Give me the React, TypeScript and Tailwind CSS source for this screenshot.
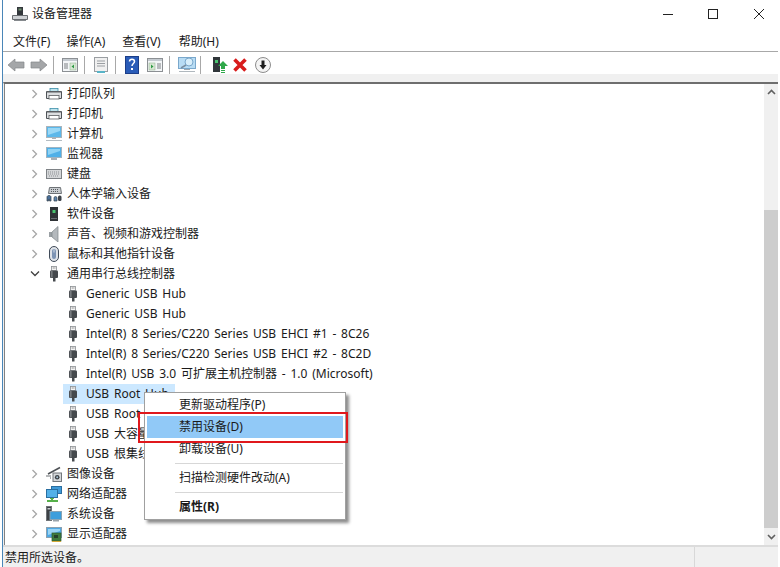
import React from "react";

const Printer = () => (
  <svg width="16" height="16" viewBox="0 0 16 16">
    <rect x="4" y="2.500" width="8" height="3" fill="#bfe4ee" stroke="#3d8ea8" strokeWidth="0.800" />
    <path d="M0.500 5.500h15v7h-15z" fill="#dcdee0" stroke="#4e5256" />
    <rect x="1" y="5" width="14" height="1.500" fill="#5a5e62" />
    <rect x="3" y="9.500" width="10" height="3.500" fill="#fff" stroke="#5a5e62" strokeWidth="0.800" />
  </svg>
);
const Computer = () => (
  <svg width="16" height="16" viewBox="0 0 16 16">
    <rect x="0.500" y="0.500" width="15" height="11" fill="#5cb8ea" stroke="#a8b4bc" />
    <path d="M2 2h12v3L2 9z" fill="#9ad8f6" />
    <rect x="6" y="12" width="4" height="1" fill="#a8b0b6" />
    <rect x="0" y="14" width="16" height="1" fill="#b4bcc2" />
  </svg>
);
const Monitor = () => (
  <svg width="16" height="16" viewBox="0 0 16 16">
    <rect x="0.500" y="1.500" width="15" height="10" fill="#4fb0e8" stroke="#9fb4c2" />
    <path d="M2 3h12v2L2 9z" fill="#8ed2f4" />
    <rect x="5" y="12" width="6" height="2" fill="#a8b0b6" />
  </svg>
);
const Keyboard = () => (
  <svg width="16" height="16" viewBox="0 0 16 16">
    <rect x="0.500" y="3.500" width="15" height="9" fill="#d4d6d8" stroke="#7e8286" />
    <path d="M2 6h12M2 8h12M3 10h10" stroke="#8d9094" strokeWidth="1" strokeDasharray="1 1" />
  </svg>
);
const Hid = () => (
  <svg width="16" height="16" viewBox="0 0 16 16">
    <path d="M3.500 1.500h11l1 6h-13z" fill="#c8ccd0" stroke="#6e7276" />
    <path d="M5 3.500h8M5 5.500h8" stroke="#565a5e" strokeDasharray="1 1" />
    <path d="M1 15V11c0-2 4-2 4 0v4h-1.500l-.5-2-.5 2z" fill="#4a6f98" stroke="#34404c" strokeWidth="0.700" />
    <path d="M8 15v-3a1.500 1.500 0 0 1 3 0v3z" fill="#5d84ae" stroke="#34404c" strokeWidth="0.700" />
    <rect x="12" y="9.500" width="3.500" height="5.500" rx="1.500" fill="#3b4148" />
  </svg>
);
const Software = () => (
  <svg width="16" height="16" viewBox="0 0 16 16">
    <rect x="4" y="1" width="8" height="14" fill="#2f3336" />
    <rect x="6.500" y="4" width="3" height="3" fill="#49c46e" />
    <rect x="5" y="12" width="6" height="1" fill="#6a6e72" />
  </svg>
);
const Speaker = () => (
  <svg width="16" height="16" viewBox="0 0 16 16">
    <rect x="3" y="6" width="3" height="5" fill="#9aa0a4" />
    <path d="M6 6l6-5.500v15.500l-6-5z" fill="#b4b9bd" stroke="#80868a" strokeWidth="0.700" />
  </svg>
);
const Mouse = () => (
  <svg width="16" height="16" viewBox="0 0 16 16">
    <rect x="3.500" y="0.500" width="9" height="15" rx="4.500" fill="#dfe3e8" stroke="#3f4a58" />
    <rect x="6" y="3" width="4" height="10" rx="2" fill="#7d94b4" />
    <rect x="7.500" y="3.500" width="1" height="3" fill="#d4dce8" />
  </svg>
);
const Usb = () => (
  <svg width="16" height="16" viewBox="0 0 16 16">
    <rect x="5.500" y="0.500" width="5" height="4" fill="#f4f4f4" stroke="#8a8e92" strokeWidth="0.800" />
    <rect x="6.800" y="1.500" width="0.800" height="1" fill="#555" />
    <rect x="8.500" y="1.500" width="0.800" height="1" fill="#555" />
    <rect x="4" y="4.500" width="8" height="7.500" rx="1" fill="#45494d" />
    <rect x="4.800" y="5" width="1.800" height="6.500" fill="#777b7f" />
    <rect x="7" y="12" width="2.500" height="3.500" fill="#45494d" />
  </svg>
);
const Camera = () => (
  <svg width="16" height="16" viewBox="0 0 16 16">
    <path d="M2 8L14 1.500" stroke="#4d5155" strokeWidth="1.500" />
    <path d="M0 9.500h5v1H0z" fill="#6a6e72" />
    <path d="M4 12h1" stroke="#55595d" />
    <rect x="7" y="7" width="8.500" height="8.500" fill="#d4d7da" stroke="#73777b" />
    <circle cx="11.200" cy="11.200" r="2.300" fill="#3c4044" />
    <circle cx="11.200" cy="11.200" r="1" fill="#a8c4d8" />
  </svg>
);
const Network = () => (
  <svg width="16" height="16" viewBox="0 0 16 16">
    <rect x="5.500" y="0.500" width="10" height="7" fill="#3f9ad8" stroke="#2a6ea0" />
    <rect x="0.500" y="3.500" width="11" height="8" fill="#52b0e8" stroke="#2a6ea0" />
    <rect x="4" y="12" width="4" height="1" fill="#6ca848" />
    <path d="M1 15h11" stroke="#56b04a" strokeWidth="2" />
    <rect x="5" y="12" width="2" height="2" fill="#56b04a" />
  </svg>
);
const SystemDev = () => (
  <svg width="16" height="16" viewBox="0 0 16 16">
    <rect x="0.500" y="0.500" width="5" height="14" fill="#3d4145" stroke="#6f7377" />
    <rect x="1.500" y="2" width="3" height="1.500" fill="#c4c8cc" />
    <rect x="4" y="5.500" width="11.500" height="8" fill="#3d9edc" stroke="#8aa4b4" />
    <rect x="7" y="14" width="6" height="1.500" fill="#9aa4ac" />
  </svg>
);
const Display = () => (
  <svg width="16" height="16" viewBox="0 0 16 16">
    <rect x="0.500" y="1.500" width="15" height="10" fill="#4ea8e4" stroke="#8aa0b0" />
    <path d="M2 3h12v2L2 9z" fill="#9ad4f4" />
    <rect x="6" y="7" width="9" height="8" fill="#3f7a3c" stroke="#2c5a2c" strokeWidth="0.700" />
    <rect x="8" y="9" width="4" height="3" fill="#25402a" />
    <rect x="6" y="15" width="9" height="1" fill="#d4a838" />
  </svg>
);

const ChevronRight = () => (
  <svg width="8" height="10" viewBox="0 0 8 10" fill="none">
    <path d="M1.500 1l4 4-4 4" stroke="#a6a6a6" strokeWidth="1.300" />
  </svg>
);
const ChevronDown = () => (
  <svg width="10" height="8" viewBox="0 0 10 8" fill="none">
    <path d="M1 1.500l4 4 4-4" stroke="#404040" strokeWidth="1.300" />
  </svg>
);

type RowT = { label: string; Icon: React.FC; open?: boolean };
const top1: RowT[] = [
  { label: "打印队列", Icon: Printer },
  { label: "打印机", Icon: Printer },
  { label: "计算机", Icon: Computer },
  { label: "监视器", Icon: Monitor },
  { label: "键盘", Icon: Keyboard },
  { label: "人体学输入设备", Icon: Hid },
  { label: "软件设备", Icon: Software },
  { label: "声音、视频和游戏控制器", Icon: Speaker },
  { label: "鼠标和其他指针设备", Icon: Mouse },
  { label: "通用串行总线控制器", Icon: Usb, open: true },
];
const kids = [
  "Generic USB Hub",
  "Generic USB Hub",
  "Intel(R) 8 Series/C220 Series USB EHCI #1 - 8C26",
  "Intel(R) 8 Series/C220 Series USB EHCI #2 - 8C2D",
  "Intel(R) USB 3.0 可扩展主机控制器 - 1.0 (Microsoft)",
  "USB Root Hub",
  "USB Root Hub",
  "USB 大容量存储设备",
  "USB 根集线器(USB 3.0)",
];
const top2: RowT[] = [
  { label: "图像设备", Icon: Camera },
  { label: "网络适配器", Icon: Network },
  { label: "系统设备", Icon: SystemDev },
  { label: "显示适配器", Icon: Display },
];

const TopRow = ({ label, Icon, open }: RowT) => (
  <div className="flex h-5 items-center">
    <span className="ml-[24px] flex w-[12px] justify-center">{open ? <ChevronDown /> : <ChevronRight />}</span>
    <span className="ml-[5px] flex w-4 justify-center"><Icon /></span>
    <span className="ml-[5px] whitespace-nowrap">{label}</span>
  </div>
);

const Sep = ({ ml }: { ml: string }) => <div className={`h-[18px] w-px bg-[#a8a8a8] ${ml}`} />;

const Pane = ({ flip }: { flip?: boolean }) => (
  <svg width="16" height="16" viewBox="0 0 16 16">
    <rect x="0.500" y="1.500" width="15" height="13" fill="#f4f6f8" stroke="#8c9094" />
    <rect x="1" y="2" width="14" height="2" fill="#c4cad0" />
    {flip ? (
      <>
        <rect x="2" y="6" width="6" height="7" fill="#d8e8d4" stroke="#8cae88" strokeWidth="0.500" />
        <path d="M4 7.500l2.500 2-2.500 2z" fill="#2f9a46" />
        <path d="M10 7h4M10 9h4M10 11h4" stroke="#7c8084" />
      </>
    ) : (
      <>
        <path d="M2 7h4M2 9h4M2 11h4" stroke="#7c8084" />
        <rect x="8" y="6" width="6" height="7" fill="#d8e8d4" stroke="#8cae88" strokeWidth="0.500" />
        <path d="M12 7.500l-2.500 2 2.500 2z" fill="#2f9a46" />
      </>
    )}
  </svg>
);

export default function App() {
  const font = { fontFamily: '"Noto Sans","Noto Sans CJK SC",sans-serif' };
  return (
    <div className="relative h-[567px] w-[780px] overflow-hidden bg-white pl-[2px] pr-[2px] text-[12px] text-[#1a1a1a]" style={font}>
      <div className="flex h-full flex-col border-l border-[#4a86b8]">
        {/* Title bar */}
        <div className="flex h-[28px] items-center pb-[1px] pl-[9px]">
          <svg width="16" height="16" viewBox="0 0 16 16">
            <rect x="5" y="1" width="6" height="8" fill="#34383c" />
            <rect x="6.500" y="2.500" width="3" height="2" fill="#6f8f6f" />
            <path d="M0.500 9.500h15v4h-15z" fill="#cfd2d5" stroke="#6a6e72" />
            <rect x="2" y="14" width="12" height="1" fill="#85898d" />
          </svg>
          <span className="ml-[4px] text-[12px]">设备管理器</span>
          <div className="ml-auto flex items-center">
            <svg width="12" height="12" viewBox="0 0 12 12" className="mr-[33px]"><path d="M1 6.500h10" stroke="#222" /></svg>
            <svg width="12" height="12" viewBox="0 0 12 12" className="mr-[34px]"><rect x="1.500" y="1.500" width="9" height="9" fill="none" stroke="#222" /></svg>
            <svg width="12" height="12" viewBox="0 0 12 12" className="mr-[13px]"><path d="M1 1l10 10M11 1L1 11" stroke="#222" /></svg>
          </div>
        </div>
        {/* Menu */}
        <div className="flex h-[24px] items-center border-b border-[#a8a8a8] pl-[10px] pt-[5px] text-[12px]">
          <span>文件(F)</span>
          <span className="ml-[16px]">操作(A)</span>
          <span className="ml-[17px]">查看(V)</span>
          <span className="ml-[18px]">帮助(H)</span>
        </div>
        {/* Toolbar */}
        <div className="flex h-[22px] items-center pl-[4px] pt-[4px]">
          <svg width="18" height="14" viewBox="0 0 18 14"><path d="M8 1L1 7l7 6v-3h9V4H8z" fill="#a4a6a8" stroke="#85878a" strokeWidth="0.700" /></svg>
          <svg width="18" height="14" viewBox="0 0 18 14" className="ml-[5px]"><path d="M10 1l7 6-7 6v-3H1V4h9z" fill="#a4a6a8" stroke="#85878a" strokeWidth="0.700" /></svg>
          <Sep ml="ml-[5px]" />
          <div className="ml-[8px]"><Pane /></div>
          <Sep ml="ml-[6px]" />
          <div className="ml-[8px]">
            <svg width="16" height="16" viewBox="0 0 16 16">
              <rect x="1.500" y="0.500" width="13" height="14" fill="#f0f0f0" stroke="#9a9ea2" />
              <path d="M4 4h8M4 6.500h8M4 9h8" stroke="#9a9ea2" />
              <rect x="4" y="14" width="8" height="2" fill="#58b4c8" />
            </svg>
          </div>
          <Sep ml="ml-[6px]" />
          <svg width="16" height="18" viewBox="0 0 16 18" className="ml-[8px]">
            <rect x="1.500" y="0.500" width="13" height="17" fill="#2a5cb8" stroke="#1c3e88" />
            <path d="M5.500 5.500c0-3 5-3 5 0 0 2-2.500 2-2.500 4.500" fill="none" stroke="#fff" strokeWidth="1.500" />
            <rect x="7" y="12" width="2" height="2" fill="#fff" />
          </svg>
          <div className="ml-[7px]"><Pane flip /></div>
          <Sep ml="ml-[6px]" />
          <svg width="18" height="18" viewBox="0 0 18 18" className="ml-[8px]">
            <rect x="0.500" y="1.500" width="17" height="11" fill="#b8dcf4" stroke="#7aa8cc" />
            <circle cx="11" cy="6" r="4" fill="#d8eefa" stroke="#7aa8cc" />
            <path d="M8 9l-5 3" stroke="#7a8ea0" strokeWidth="1.500" />
            <rect x="6" y="13" width="6" height="1" fill="#a0a8ae" />
            <rect x="1" y="15" width="16" height="1" fill="#b0b8be" />
          </svg>
          <Sep ml="ml-[4px]" />
          <svg width="16" height="18" viewBox="0 0 16 18" className="ml-[11px]">
            <rect x="1" y="1" width="7" height="15" fill="#30363a" />
            <rect x="3" y="4" width="3" height="3" fill="#49c46e" />
            <path d="M11 5l5 5h-3v3H9v-3H6z" fill="#2fa84a" />
            <path d="M9 14h4v1H9zM9 16h4v1H9z" fill="#2fa84a" />
          </svg>
          <svg width="16" height="16" viewBox="0 0 16 16" className="ml-[4px]">
            <path d="M2.500 2.500l11 11M13.500 2.500l-11 11" stroke="#d81c1c" strokeWidth="3.600" />
          </svg>
          <svg width="16" height="16" viewBox="0 0 16 16" className="ml-[7px]">
            <circle cx="8" cy="8" r="7.500" fill="#f4f4f4" stroke="#8c8c8c" />
            <path d="M6.500 3.500h3V8h2L8 12.500 4.500 8h2z" fill="#1c1c1c" />
          </svg>
        </div>
        {/* Strip */}
        <div className="h-2 bg-[#f0f0f0]" />
        {/* Tree + scrollbar */}
        <div className="flex h-[463px] border-l border-t-2 border-l-[#f0f0f0] border-t-[#6e6e6e]">
          <div className="flex-1 border-l border-[#828282] leading-5">
            {top1.map((r, i) => <TopRow key={i} {...r} />)}
            {kids.map((k, i) => (
              <div key={i} className="flex h-5 items-center">
                <div className={`ml-[58px] flex h-5 items-center pr-[6px] ${i === 5 ? "bg-[#cce8ff]" : ""}`}>
                  <span className="ml-[2px] flex w-4 justify-center"><Usb /></span>
                  <span className="ml-[5px] whitespace-nowrap text-[12px] [word-spacing:1.7px]">{k}</span>
                </div>
              </div>
            ))}
            {top2.map((r, i) => <TopRow key={i} {...r} />)}
          </div>
          <div className="flex w-[14px] flex-col bg-[#f0f0f0]">
            <div className="flex h-[15px] items-center justify-center">
              <svg width="9" height="6" viewBox="0 0 9 6"><path d="M1 5l3.500-3.500L8 5" fill="none" stroke="#606060" strokeWidth="1.600" /></svg>
            </div>
            <div className="h-[111px]" />
            <div className="flex-1 bg-[#cdcdcd]" />
            <div className="flex h-[17px] items-center justify-center">
              <svg width="9" height="6" viewBox="0 0 9 6"><path d="M1 1l3.500 3.500L8 1" fill="none" stroke="#606060" strokeWidth="1.600" /></svg>
            </div>
          </div>
        </div>
        {/* Status bar */}
        <div className="flex flex-1 items-center border-t-2 border-[#dcdcdc] bg-[#f0f0f0] pl-[2px] text-[12px]">
          <span className="w-[689px] pt-[2px]">禁用所选设备。</span>
          <div className="h-full w-px bg-[#d8d8d8]" />
        </div>
      </div>

      {/* Context menu */}
      <div className="absolute left-[144px] top-[392px] h-[128px] w-[202px] border border-[#a0a0a0] bg-white py-[1px] pl-[2px] pr-[2px] text-[12px] shadow-[3px_3px_3px_rgba(0,0,0,0.45)]">
        <div className="flex h-[22px] items-center pl-[32px]">更新驱动程序(P)</div>
        <div className="flex h-[22px] items-center bg-[#91c9f7] pl-[32px]">禁用设备(D)</div>
        <div className="flex h-[22px] items-center pl-[32px]">卸载设备(U)</div>
        <div className="my-[3px] ml-[28px] h-px bg-[#d7d7d7]" />
        <div className="flex h-[22px] items-center pl-[32px]">扫描检测硬件改动(A)</div>
        <div className="my-[3px] ml-[28px] h-px bg-[#d7d7d7]" />
        <div className="flex h-[22px] items-center pl-[32px] font-bold">属性(R)</div>
      </div>
      {/* Annotation */}
      <div className="absolute left-[138px] top-[412px] h-[31px] w-[210px] border-[2.500px] border-[#e0181c]" />
    </div>
  );
}
